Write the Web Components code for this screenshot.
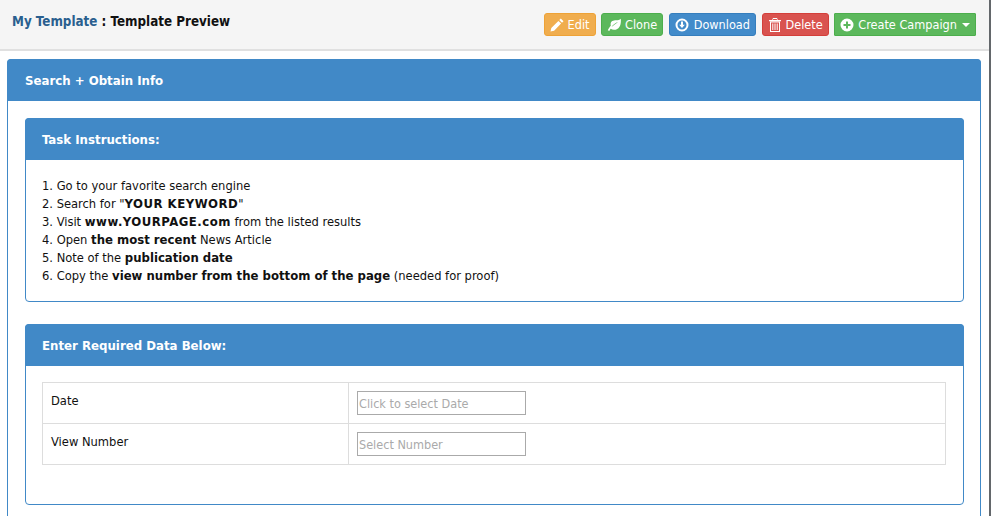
<!DOCTYPE html>
<html><head><meta charset="utf-8">
<style>
html,body{margin:0;height:516px;overflow:hidden;background:#fff}
body{font:12.8px "DejaVu Sans",sans-serif;font-stretch:condensed;color:#111;border-right:2px solid #63676b;box-sizing:border-box}
b{font-size:13px}
b.w{letter-spacing:.5px}
</style></head><body>
<template id="t-bar"><style>
:host{display:flex;justify-content:space-between;height:49px;background:#f5f5f5;border-bottom:2px solid #e0e0e0;padding:0 13px 0 12px}
.t{font-weight:700;font-size:13.3px;padding-top:13px;line-height:17px;color:#111}
.a{display:flex;gap:5.5px;padding-top:13px}
</style><div class="t"><slot name="title"></slot></div><div class="a"><slot></slot></div></template>

<template id="t-btn"><style>
:host{display:inline-flex;align-items:center;gap:var(--g,4px);height:23px;box-sizing:border-box;border:1px solid var(--b);background:var(--c);color:#fff;border-radius:var(--r,3px);padding:0 5px;margin-right:var(--m,0);white-space:nowrap;font-size:12.6px}
::slotted(svg){width:14px;height:14px;fill:#fff;flex:none}
::slotted(svg.caret){width:8px;height:8px;order:2;margin-left:1px}
</style><slot name="i"></slot><slot></slot></template>

<template id="t-panel"><style>
:host{display:block;border:1px solid #4189c7;border-radius:4px;box-sizing:border-box}
header{background:#4189c7;color:#fff;font-weight:700;font-size:13.1px;height:42px;line-height:44px;padding-left:var(--pl,17px);margin:-1px -1px 0;border-radius:4px 4px 0 0}
</style><header><slot name="h"></slot></header><slot></slot></template>

<template id="t-list"><style>
:host{display:block;padding:17px 16px 16px;line-height:18px}
</style><slot></slot></template>

<template id="t-row"><style>
:host{display:grid;grid-template-columns:306px 1fr;border:1px solid #ddd;border-top:0;height:41px;box-sizing:border-box}
:host([first]){border-top:1px solid #ddd;height:42px}
.l{padding:9px 8px;border-right:1px solid #ddd;line-height:18px}
.r{padding:8px}
.i{display:block;width:169px;height:24px;box-sizing:border-box;border:1px solid #aaa;color:#aaa;line-height:23px;padding-left:1px;font-size:12.55px}
</style><div class="l"><slot name="label"></slot></div><div class="r"><div class="i"><slot name="ph"></slot></div></div></template>

<top-bar><span slot="title"><span style="color:#2a5f8f">My Template</span> : Template Preview</span>
<ui-btn style="--c:#f0ad4e;--b:#eea236"><svg slot="i" viewBox="0 0 14 14"><path d="M10.800.5l2.700 2.700-1.500 1.500-2.700-2.700zM8.400 2.900l2.700 2.700-7 7.100L.5 13.500l.8-3.500z"/></svg>Edit</ui-btn>
<ui-btn style="--c:#5cb85c;--b:#4cae4c"><svg slot="i" viewBox="0 0 14 14"><path fill-rule="evenodd" d="M13.800.8c.5 5.500-1 11-6.800 11-1.300 0-2.400-.4-3.300-1-.5.6-1 1.300-1.400 2.200L.8 12.300c.7-2 2.100-3.700 3-4.600C2.800 3.500 6 2.300 9 2.300c2 0 3.600 0 4.800-1.500zM11 4C8.500 5 6 6.500 4.500 9 6 7.700 8.500 6 11 4z"/></svg>Clone</ui-btn>
<ui-btn style="--c:#428bca;--b:#357ebd;--g:5px;--m:1px"><svg slot="i" viewBox="0 0 14 14"><path fill-rule="evenodd" d="M7 .5a6.500 6.500 0 1 1 0 13 6.500 6.500 0 0 1 0-13zm0 2a4.500 4.500 0 1 0 0 9 4.500 4.500 0 0 0 0-9zM6 3.500h2v3.300h1.800L7 10 4.200 6.800H6z"/></svg>Download</ui-btn>
<ui-btn style="--c:#d9534f;--b:#d43f3a;--g:3px"><svg slot="i" viewBox="0 0 14 14"><path fill-rule="evenodd" d="M5 0h4l.8 2H13v1.200H1V2h3.200zM5.200 1L5 2h4l-.2-1zM2 3.500h10V14H2zM3 4.500V13h8V4.500zM4.300 5.500h1v6.500h-1zM6.500 5.500h1v6.500h-1zM8.700 5.500h1v6.500h-1z"/></svg>Delete</ui-btn>
<ui-btn style="--c:#5cb85c;--b:#4cae4c;--r:1px"><svg slot="i" viewBox="0 0 14 14"><path fill-rule="evenodd" d="M7 .5a6.500 6.500 0 1 1 0 13 6.500 6.500 0 0 1 0-13zM6 3.500V6H3.500v2H6v2.500h2V8h2.500V6H8V3.500z"/></svg>Create Campaign<svg slot="i" class="caret" viewBox="0 0 8 8"><path d="M0 2h8L4 6z"/></svg></ui-btn>
</top-bar>

<main-area>
<ui-panel style="margin:8px 0 0 7px;height:600px;width:974px;--pl:18px"><span slot="h">Search + Obtain Info</span>
<div style="padding:17px 16px 0 17px;--pl:17px">
<ui-panel style="width:939px"><span slot="h">Task Instructions:</span>
<step-list>
<div>1. Go to your favorite search engine</div>
<div>2. Search for "<b class="w">YOUR KEYWORD</b>"</div>
<div>3. Visit <b class="w">www.YOURPAGE.com</b> from the listed results</div>
<div>4. Open <b>the most recent</b> News Article</div>
<div>5. Note of the <b>publication date</b></div>
<div>6. Copy the <b>view number from the bottom of the page</b> (needed for proof)</div>
</step-list></ui-panel>
<ui-panel style="width:939px;margin-top:22px;height:181px"><span slot="h">Enter Required Data Below:</span>
<div style="padding:16px 17px 0 16px">
<data-row first><span slot="label">Date</span><span slot="ph">Click to select Date</span></data-row>
<data-row><span slot="label">View Number</span><span slot="ph">Select Number</span></data-row>
</div></ui-panel>
</div></ui-panel>
</main-area>
<script>
const reg=(n,t)=>customElements.define(n,class extends HTMLElement{constructor(){super();this.attachShadow({mode:'open'}).appendChild(document.getElementById(t).content.cloneNode(true))}});
reg('top-bar','t-bar');reg('ui-btn','t-btn');reg('ui-panel','t-panel');reg('step-list','t-list');reg('data-row','t-row');
customElements.define('main-area',class extends HTMLElement{constructor(){super();this.attachShadow({mode:'open'}).innerHTML='<style>:host{display:block}</style><slot></slot>'}});
</script>
</body></html>
